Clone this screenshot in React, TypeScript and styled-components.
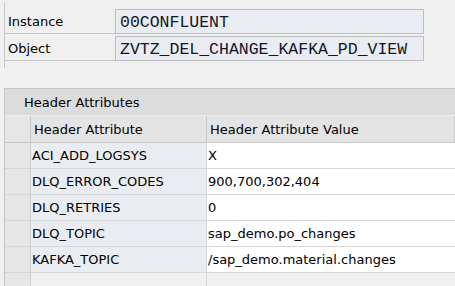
import styled, { createGlobalStyle } from 'styled-components'

const GlobalStyle = createGlobalStyle`
  html, body {
    margin: 0;
    padding: 0;
    background: #f0f0f0;
    overflow: hidden;
  }
  body {
    font-family: 'DejaVu Sans', Verdana, sans-serif;
    font-size: 13px;
    color: #000000;
  }
`

const attributes = [
  { name: 'ACI_ADD_LOGSYS', value: 'X' },
  { name: 'DLQ_ERROR_CODES', value: '900,700,302,404' },
  { name: 'DLQ_RETRIES', value: '0' },
  { name: 'DLQ_TOPIC', value: 'sap_demo.po_changes' },
  { name: 'KAFKA_TOPIC', value: '/sap_demo.material.changes' },
]

function App() {
  return (
    <Page>
      <GlobalStyle />
      <Form>
        <FormRow>
          <Label>Instance</Label>
          <Field>00CONFLUENT</Field>
        </FormRow>
        <FormRow>
          <Label>Object</Label>
          <Field>ZVTZ_DEL_CHANGE_KAFKA_PD_VIEW</Field>
        </FormRow>
      </Form>
      <Table>
        <Title>Header Attributes</Title>
        <HeadRow>
          <Selector $head />
          <HeadCell>Header Attribute</HeadCell>
          <HeadCell>Header Attribute Value</HeadCell>
        </HeadRow>
        {attributes.map((a) => (
          <Row key={a.name}>
            <Selector />
            <KeyCell>{a.name}</KeyCell>
            <ValueCell>{a.value}</ValueCell>
          </Row>
        ))}
        <Row>
          <Selector />
          <KeyCell $empty />
          <ValueCell $empty />
        </Row>
      </Table>
    </Page>
  )
}

export default App

const Page = styled.div`
  width: 455px;
  height: 286px;
  overflow: hidden;
`
const Form = styled.div`
  margin: 3px 0 0 4px;
  padding: 6px 0 7px;
  border-left: 1px solid #c6c6c6;
  display: flex;
  flex-direction: column;
  gap: 2px;
`
const FormRow = styled.div`
  display: flex;
  height: 25px;
`
const Label = styled.div`
  width: 110px;
  box-sizing: border-box;
  padding-left: 3px;
  border-bottom: 1px solid #c6c6c6;
  display: flex;
  align-items: center;
`
const Field = styled.div`
  width: 309px;
  box-sizing: border-box;
  border: 1px solid #bdbdbd;
  background: #e9edf1;
  padding: 1px 0 0 4px;
  display: flex;
  align-items: center;
  font-family: 'Liberation Mono', 'Courier New', monospace;
  font-size: 16.5px;
  color: #141428;
`
const Table = styled.div`
  margin: 20px 0 0 4px;
  border-left: 1px solid #c4c4c4;
  border-top: 1px solid #c8c8c8;
`
const Title = styled.div`
  height: 27px;
  box-sizing: border-box;
  background: #dcdcdc;
  border-bottom: 1px solid #ebebeb;
  padding-left: 19px;
  display: flex;
  align-items: center;
`
const Row = styled.div`
  display: grid;
  grid-template-columns: 26px 176px 1fr;
  height: 26px;
  border-bottom: 1px solid #d6d6d6;
  box-sizing: border-box;
`
const HeadRow = styled(Row)`
  height: 27px;
  background: #e4e4e4;
  border-bottom: 1px solid #c8c8c8;
`
const Selector = styled.div<{ $head?: boolean }>`
  background: #e6e6e6;
  border-right: 1px solid ${(p) => (p.$head ? '#c8c8c8' : '#d0d0d0')};
`
const Cell = styled.div`
  display: flex;
  align-items: center;
  white-space: nowrap;
  overflow: hidden;
`
const HeadCell = styled(Cell)`
  padding-left: 3px;
  border-right: 1px solid #c8c8c8;
`
const KeyCell = styled(Cell)<{ $empty?: boolean }>`
  padding-left: 1px;
  background: ${(p) => (p.$empty ? '#f0f0f0' : '#e9edf1')};
  border-right: 1px solid #d6d6d6;
`
const ValueCell = styled(Cell)<{ $empty?: boolean }>`
  padding-left: 1px;
  background: ${(p) => (p.$empty ? '#f0f0f0' : '#ffffff')};
`
